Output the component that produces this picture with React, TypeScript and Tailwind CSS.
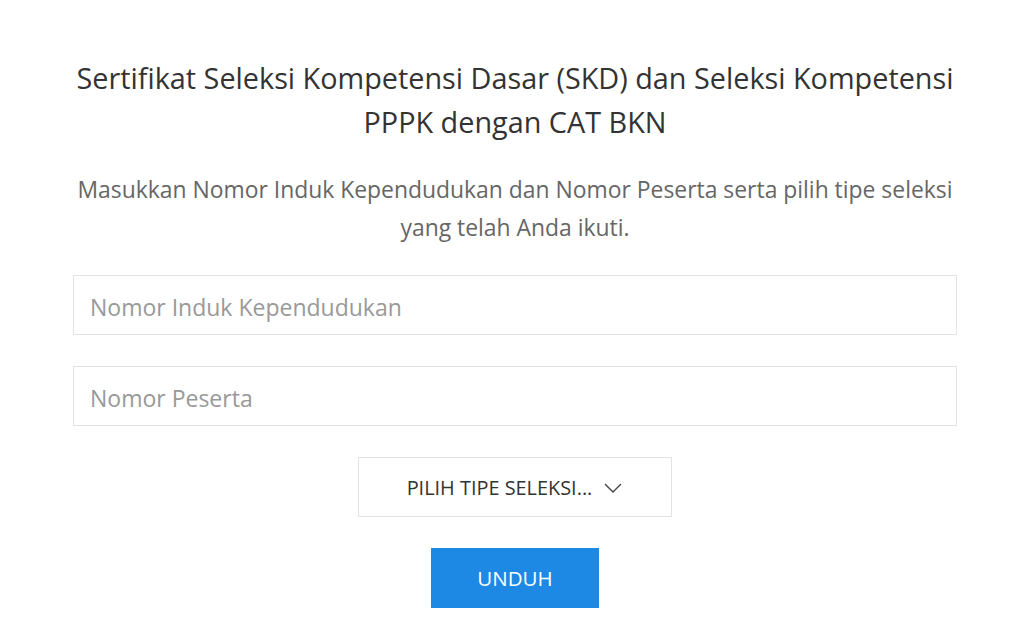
import React from "react";

export default function App() {
  return (
    <div className="w-[1024px] h-[637px] bg-white overflow-hidden" style={{ fontFamily: '"Open Sans", "Noto Sans", sans-serif' }}>
      <div className="ml-[73px] w-[884px] flex flex-col items-center pt-[56px]">
        <h1 className="text-[28.8px] leading-[44px] text-[#333] text-center font-normal whitespace-nowrap">
          Sertifikat Seleksi Kompetensi Dasar (SKD) dan Seleksi Kompetensi
          <br />
          PPPK dengan CAT BKN
        </h1>
        <p className="mt-[27px] text-[22.9px] leading-[38px] text-[#666] text-center whitespace-nowrap">
          Masukkan Nomor Induk Kependudukan dan Nomor Peserta serta pilih tipe seleksi
          <br />
          yang telah Anda ikuti.
        </p>
        <input
          className="mt-[28px] w-full h-[60px] border border-[#e3e3e3] px-[16px] pt-[3px] text-[23px] text-[#333] placeholder:text-[#999] outline-none"
          placeholder="Nomor Induk Kependudukan"
        />
        <input
          className="mt-[31px] w-full h-[60px] border border-[#e3e3e3] px-[16px] pt-[3px] text-[23px] text-[#333] placeholder:text-[#999] outline-none"
          placeholder="Nomor Peserta"
        />
        <button className="mt-[31px] w-[314px] h-[60px] border border-[#e3e3e3] bg-white flex items-center justify-center gap-[11px] pt-[1px] text-[19.9px] text-[#333]">
          <span>PILIH TIPE SELEKSI...</span>
          <svg width="20" height="12" viewBox="0 0 20 12" fill="none" stroke="#444" strokeWidth="1.4">
            <path d="M2 2 L10 10 L18 2" />
          </svg>
        </button>
        <button className="mt-[31px] w-[168px] h-[60px] bg-[#1e88e5] text-white text-[20.5px]">
          UNDUH
        </button>
      </div>
    </div>
  );
}
